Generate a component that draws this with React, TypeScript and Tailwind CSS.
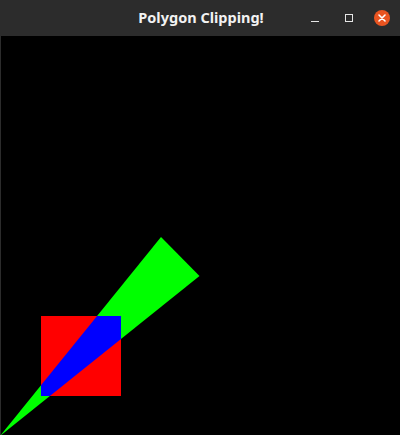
const TRI = "161,201 199.5,240 0,400";

function TitleBar() {
  return (
    <div className="relative flex h-[36px] items-center justify-center bg-[#2c2c2c]">
      <span
        className="ml-[2px] text-[14.5px] font-bold text-[#f2f2f2]"
        style={{ fontFamily: '"Noto Sans", "DejaVu Sans", sans-serif' }}
      >
        Polygon Clipping!
      </span>
      <div className="absolute right-[10px] top-0 flex h-[36px] items-center">
        <div className="flex w-[26px] justify-center">
          <div className="mt-[6px] h-[1px] w-[8px] bg-[#e6e6e6]" />
        </div>
        <div className="ml-[8px] flex w-[26px] justify-center">
          <div className="h-[8px] w-[8px] border border-[#e6e6e6]" />
        </div>
        <div className="ml-[12px] flex h-[16px] w-[16px] items-center justify-center rounded-full bg-[#e95420]">
          <svg width="8" height="8" viewBox="0 0 8 8">
            <path d="M1 1 L7 7 M7 1 L1 7" stroke="#fff" strokeWidth="1.6" strokeLinecap="round" />
          </svg>
        </div>
      </div>
    </div>
  );
}

export default function App() {
  return (
    <div className="h-[435px] w-[400px] overflow-hidden bg-black">
      <TitleBar />
      <div className="h-[399px] border-l border-[#2c2c2c]">
        <svg width="399" height="399" viewBox="1 0 399 399" className="block">
          <defs>
            <clipPath id="sq">
              <rect x="41" y="280" width="80" height="80" />
            </clipPath>
          </defs>
          <polygon points={TRI} fill="#00ff00" />
          <rect x="41" y="280" width="80" height="80" fill="#ff0000" />
          <polygon points={TRI} fill="#0000ff" clipPath="url(#sq)" />
        </svg>
      </div>
    </div>
  );
}
